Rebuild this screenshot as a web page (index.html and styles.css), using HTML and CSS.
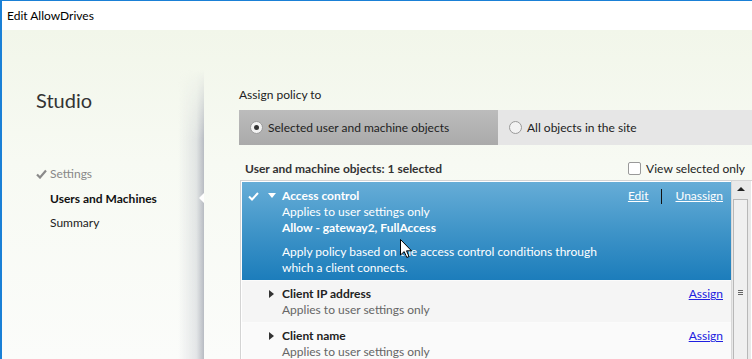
FILE: index.html
```html
<!DOCTYPE html>
<html lang="en">
<head>
    <meta charset="UTF-8">
    <title>Edit AllowDrives</title>
    <link rel="stylesheet" href="styles.css">
</head>
<body>
    <div class="window">
        <div class="titlebar">Edit AllowDrives</div>
        <div class="main">
            <!-- Left wizard steps -->
            <div class="sidebar">
                <h1 class="brand">Studio</h1>
                <ul class="steps">
                    <li class="step done">
                        <svg class="tick" width="11" height="10" viewBox="0 0 11 10"><path d="M1 5.5 L4 8.5 L10 1.5" fill="none" stroke="#8a8a8a" stroke-width="2.2"/></svg>
                        Settings
                    </li>
                    <li class="step current">Users and Machines</li>
                    <li class="step">Summary</li>
                </ul>
                <div class="notch"></div>
            </div>

            <!-- Assignment panel -->
            <div class="content">
                <div class="label">Assign policy to</div>
                <div class="radio-bar">
                    <div class="radio-opt selected"><span class="radio on"></span>Selected user and machine objects</div>
                    <div class="radio-opt"><span class="radio"></span>All objects in the site</div>
                </div>
                <div class="list-head">
                    <span>User and machine objects: 1 selected</span>
                    <label class="check"><span class="box"></span>View selected only</label>
                </div>
                <div class="listbox">
                    <div class="items">
                        <div class="item active">
                            <div class="item-top">
                                <svg class="item-tick" width="11" height="9" viewBox="0 0 11 9"><path d="M1 4.5 L4 7.5 L10 1" fill="none" stroke="#fff" stroke-width="2"/></svg>
                                <span class="caret down"></span>
                                <span class="item-title">Access control</span>
                                <span class="actions"><a>Edit</a><i class="sep"></i><a>Unassign</a></span>
                            </div>
                            <div class="item-sub">Applies to user settings only</div>
                            <div class="item-value">Allow - gateway2, FullAccess</div>
                            <div class="item-desc">Apply policy based on the access control conditions through<br>which a client connects.</div>
                        </div>
                        <div class="item">
                            <div class="item-top">
                                <span class="caret right"></span>
                                <span class="item-title">Client IP address</span>
                                <span class="actions"><a class="assign">Assign</a></span>
                            </div>
                            <div class="item-sub">Applies to user settings only</div>
                        </div>
                        <div class="item alt">
                            <div class="item-top">
                                <span class="caret right"></span>
                                <span class="item-title">Client name</span>
                                <span class="actions"><a class="assign">Assign</a></span>
                            </div>
                            <div class="item-sub">Applies to user settings only</div>
                        </div>
                    </div>
                    <div class="scrollbar">
                        <div class="arrow-up"></div>
                        <div class="thumb"><span class="grip"></span></div>
                    </div>
                </div>
            </div>
        </div>
        <svg class="cursor" width="13" height="20" viewBox="0 0 13 20"><path d="M0.5 0.5 L0.5 16 L4.2 12.6 L6.8 18.5 L9 17.5 L6.5 11.8 L11.5 11.8 Z" fill="#fff" stroke="#000" stroke-width="1"/></svg>
    </div>
</body>
</html>
```

FILE: styles.css
```css
* {
    margin: 0;
    padding: 0;
    box-sizing: border-box;
}
body {
    font-family: Lato, "Open Sans", sans-serif;
    font-size: 12px;
    color: #222;
    background: #fff;
    overflow: hidden;
}
.window {
    position: relative;
    width: 752px;
    height: 359px;
    border-left: 2px solid #1a80d6;
    border-top: 1px solid #1a80d6;
    overflow: hidden;
}
.titlebar {
    height: 29px;
    line-height: 30px;
    padding-left: 5px;
    background: #fff;
    color: #000;
}
.main {
    display: flex;
    height: 329px;
    background: linear-gradient(180deg, #f2f6ea 0%, #f7faf3 40%, #fbfcfa 100%);
}
.sidebar {
    position: relative;
    width: 202px;
    padding: 57px 0 0 34px;
}
/* soft shadow along the right edge, fading in from the top */
.sidebar::after {
    content: "";
    position: absolute;
    right: 0;
    top: 40px;
    bottom: 0;
    width: 26px;
    background: linear-gradient(90deg, rgba(200,204,210,0) 0%, rgba(200,204,210,0.45) 70%, #b7bbc2 100%);
    -webkit-mask-image: linear-gradient(180deg, transparent 0px, #000 70px);
    mask-image: linear-gradient(180deg, transparent 0px, #000 70px);
}
.brand {
    font-size: 20px;
    font-weight: 400;
    color: #333;
    line-height: 26px;
}
.steps {
    list-style: none;
    margin-top: 53px;
}
.step {
    height: 24.5px;
    line-height: 16px;
    padding-left: 14px;
    color: #222;
    position: relative;
}
.step.done {
    color: #888;
}
.step.current {
    font-weight: 700;
    color: #111;
}
.tick {
    position: absolute;
    left: 0;
    top: 3px;
}
.notch {
    position: absolute;
    right: 0;
    top: 163px;
    z-index: 1;
    width: 0;
    height: 0;
    border-top: 5px solid transparent;
    border-bottom: 5px solid transparent;
    border-right: 5px solid #fff;
}
.content {
    flex: 1;
    padding: 57px 0 0 35px;
}
.label {
    line-height: 16px;
    color: #222;
}
.radio-bar {
    display: flex;
    height: 35px;
    margin-top: 7px;
}
.radio-opt {
    display: flex;
    align-items: center;
    gap: 5px;
    padding-left: 11px;
    flex: 1;
    background: #e6e6e6;
}
.radio-opt.selected {
    flex: 0 0 259px;
    background: linear-gradient(180deg, #bcbcbc, #aaaaaa);
}
.radio {
    width: 13px;
    height: 13px;
    border-radius: 50%;
    border: 1px solid #9a9a9a;
    background: #f2f2f2;
    position: relative;
}
.radio.on::after {
    content: "";
    position: absolute;
    left: 3px;
    top: 3px;
    width: 5px;
    height: 5px;
    border-radius: 50%;
    background: #333;
}
.list-head {
    display: flex;
    justify-content: space-between;
    align-items: center;
    height: 16px;
    margin-top: 15px;
    padding: 0 7px 0 6px;
    font-weight: 700;
    color: #333;
}
.check {
    display: flex;
    align-items: center;
    gap: 5px;
    font-weight: 400;
    color: #222;
}
.box {
    width: 13px;
    height: 13px;
    border: 1px solid #999;
    background: #fff;
    border-radius: 2px;
}
.listbox {
    display: flex;
    margin-top: 4px;
    margin-left: 1px;
    height: 190px;
    border: 1px solid #d4d4d4;
    border-right: none;
    padding: 1px 0 0 1px;
    background: #fff;
}
.items {
    width: 489px;
}
.item {
    background: #f5f5f5;
    padding: 5px 8px 4px 40px;
    border-bottom: 1px solid #fbfbfb;
}
.item.alt {
    background: #fafafa;
}
.item.active {
    background: linear-gradient(180deg, #66add7 0%, #3f94c8 50%, #1c7dbb 100%);
    color: #fff;
    padding: 6px 8px 4px 40px;
}
.item-top {
    position: relative;
    display: flex;
    line-height: 16px;
}
.item-title {
    font-weight: 700;
    color: #222;
}
.active .item-title {
    color: #fff;
}
.item-sub {
    line-height: 16px;
    color: #666;
}
.active .item-sub {
    color: #fff;
}
.item-value {
    line-height: 16px;
    font-weight: 700;
}
.item-desc {
    line-height: 16px;
    margin-top: 8px;
}
.item-tick {
    position: absolute;
    left: -34px;
    top: 4px;
}
.caret {
    position: absolute;
    left: -14px;
    width: 0;
    height: 0;
}
.caret.down {
    top: 5px;
    border-left: 4px solid transparent;
    border-right: 4px solid transparent;
    border-top: 5px solid #fff;
}
.caret.right {
    top: 4px;
    left: -13px;
    border-top: 4px solid transparent;
    border-bottom: 4px solid transparent;
    border-left: 5px solid #333;
}
.actions {
    margin-left: auto;
    display: flex;
    align-items: center;
}
.actions a {
    text-decoration: underline;
    color: #fff;
}
.actions a.assign {
    color: #2020e0;
}
.sep {
    width: 1px;
    height: 15px;
    background: #111;
    margin: 0 13px;
}
.scrollbar {
    width: 20px;
    margin-top: -1px;
    background: #e9e9e9;
    border-left: 1px solid #d8d8d8;
    padding: 0 3px 0 1px;
}
.arrow-up {
    width: 0;
    height: 0;
    margin: 6px auto 0;
    border-left: 4px solid transparent;
    border-right: 4px solid transparent;
    border-bottom: 4px solid #222;
}
.thumb {
    margin-top: 8px;
    height: 200px;
    background: #f0f0f0;
    border: 1px solid #b8b8b8;
    display: flex;
    justify-content: center;
    padding-top: 90px;
}
.grip {
    width: 5px;
    height: 5px;
    border-top: 1px solid #666;
    border-bottom: 1px solid #666;
    position: relative;
}
.grip::after {
    content: "";
    position: absolute;
    left: 0;
    right: 0;
    top: 1px;
    border-top: 1px solid #666;
}
.cursor {
    position: absolute;
    left: 398px;
    top: 238px;
}
```
